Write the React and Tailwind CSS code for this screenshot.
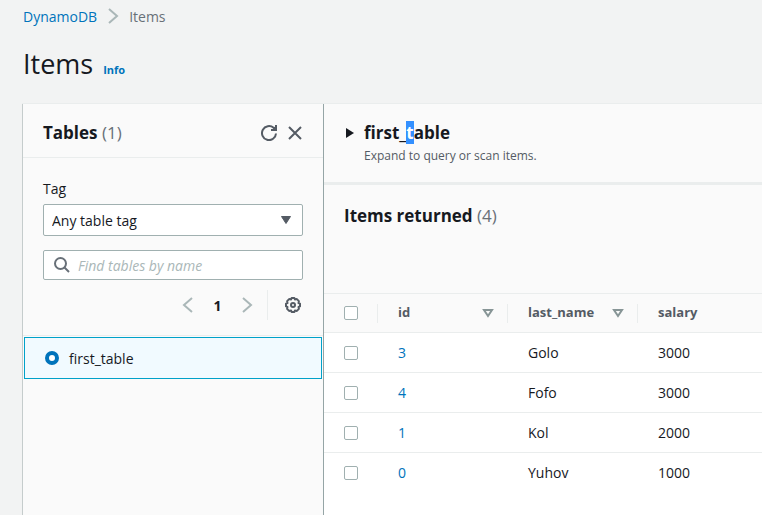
import React from "react";

const rows = [
  { id: "3", lastName: "Golo", salary: "3000" },
  { id: "4", lastName: "Fofo", salary: "3000" },
  { id: "1", lastName: "Kol", salary: "2000" },
  { id: "0", lastName: "Yuhov", salary: "1000" },
];

function Chevron({ className, left = false }) {
  return (
    <svg viewBox="0 0 16 16" className={className} fill="none" stroke="currentColor" strokeWidth="2" aria-hidden="true">
      <path d={left ? "M12 1 4 8l8 7" : "M4 1l8 7-8 7"} />
    </svg>
  );
}

function RefreshIcon() {
  return (
    <svg viewBox="0 0 16 16" className="size-4" fill="none" stroke="currentColor" strokeWidth="2" aria-hidden="true">
      <path d="M15 8.500A7 7 0 1 1 12.600 2.800L15 5" />
      <path d="M10 5h5V0" />
      <path d="M12 3l3 2V1z" fill="currentColor" stroke="none" />
    </svg>
  );
}

function CloseIcon() {
  return (
    <svg viewBox="0 0 16 16" className="size-4" fill="none" stroke="currentColor" strokeWidth="2" aria-hidden="true">
      <path d="M2 2l12 12M14 2 2 14" />
    </svg>
  );
}

function GearIcon() {
  return (
    <svg viewBox="0 0 16 16" className="size-4" fill="none" stroke="currentColor" strokeWidth="2" strokeLinejoin="round" aria-hidden="true">
      <path d="M6.600 1h2.800l.5 1.500 2-.4 2 2-.4 2 1.500.5v2.800l-1.500.5.4 2-2 2-2-.4L9.400 15H6.600l-.5-1.500-2 .4-2-2 .4-2L1 9.400V6.600l1.500-.5-.4-2 2-2 2 .4z" />
      <circle cx="8" cy="8" r="2" />
    </svg>
  );
}

function SearchIcon() {
  return (
    <svg viewBox="0 0 16 16" className="size-4" fill="none" stroke="currentColor" strokeWidth="2" aria-hidden="true">
      <circle cx="6.500" cy="6.500" r="5.500" />
      <path d="m10.500 10.500 4.500 4.500" />
    </svg>
  );
}

function SortIcon() {
  return (
    <svg viewBox="0 0 12 10" className="h-[10px] w-3" fill="none" stroke="currentColor" strokeWidth="2" aria-hidden="true">
      <path d="M2 2h8L6 8z" />
    </svg>
  );
}

function Checkbox({ label }) {
  return (
    <input
      type="checkbox"
      aria-label={label}
      className="block size-[14px] appearance-none rounded-xs border border-[#a0b0b0] bg-white checked:bg-[#0073bb]"
    />
  );
}

function HeaderCell({ children, sortable = true }) {
  return (
    <th scope="col" className="p-0 text-left text-[13px] font-bold">
      <div className="flex h-[38px] items-center">
        <span className="h-[19px] border-l border-[#eaeded]" />
        <div className="flex flex-1 items-center justify-between pr-[13px] pl-5">
          {children}
          {sortable && (
            <button type="button" aria-label={"Sort by " + children} className="text-[#879596]">
              <SortIcon />
            </button>
          )}
        </div>
      </div>
    </th>
  );
}

function TablesPanel() {
  return (
    <aside className="w-[302px] shrink-0 border-r border-l border-r-[#95a5a6] border-l-[#c5cccc] bg-[#fafafa]">
      <header className="flex h-[54px] items-center justify-between border-b border-[#eaeded] px-5 pt-1">
        <h2 className="text-[17px] font-bold">
          Tables <span className="font-normal text-[#687078]">(1)</span>
        </h2>
        <div className="flex gap-[10px] text-[#545b64]">
          <button type="button" aria-label="Refresh"><RefreshIcon /></button>
          <button type="button" aria-label="Close"><CloseIcon /></button>
        </div>
      </header>

      <div className="px-5 pt-5">
        <label htmlFor="tag" className="block pb-1 leading-[22px]">Tag</label>
        <div className="relative">
          <select id="tag" className="block h-8 w-full appearance-none rounded-xs border border-[#a0b0b0] bg-white px-2">
            <option>Any table tag</option>
          </select>
          <svg viewBox="0 0 12 10" className="pointer-events-none absolute top-[11px] right-[11px] h-[10px] w-3 fill-[#545b64]" aria-hidden="true">
            <path d="M1.500 1.500h9L6 8.500z" stroke="#545b64" strokeLinejoin="round" />
          </svg>
        </div>

        <label className="mt-[14px] flex h-[30px] items-center gap-2 rounded-xs border border-[#a0b0b0] bg-white px-[10px] text-[#687078]">
          <SearchIcon />
          <input
            type="text"
            aria-label="Find tables by name"
            placeholder="Find tables by name"
            className="min-w-0 flex-1 outline-none placeholder:text-[#aab7b8] placeholder:italic"
          />
        </label>
      </div>

      <div className="flex h-[56px] items-start justify-end border-b border-[#eaeded] px-5 pt-[10px]">
        <nav aria-label="Pagination" className="flex h-[30px] items-center gap-[17px] text-[#aab7b8]">
          <button type="button" aria-label="Previous page"><Chevron left className="size-4" /></button>
          <button type="button" className="w-[9px] font-bold text-[#16191f]">1</button>
          <button type="button" aria-label="Next page"><Chevron className="size-4" /></button>
        </nav>
        <div className="ml-3 flex h-[30px] items-center border-l border-[#eaeded] pr-[2px] pl-[17px] text-[#545b64]">
          <button type="button" aria-label="Preferences"><GearIcon /></button>
        </div>
      </div>

      <label className="m-px flex h-[42px] items-center gap-[10px] border border-[#00a1c9] bg-[#f1faff] px-5">
        <input type="radio" name="table" defaultChecked className="size-[14px] appearance-none rounded-full border border-[#a0b0b0] bg-white checked:border-[4px] checked:border-[#0073bb]" />
        first_table
      </label>
    </aside>
  );
}

function ItemsPanel() {
  return (
    <section className="min-w-0 flex-1 bg-white">
      <div className="flex h-[81px] items-start gap-2 border-b-[3px] border-[#eaeded] bg-[#fafafa] px-5 pt-[17px]">
        <button type="button" aria-label="Expand first_table" className="flex h-6 w-3 items-center justify-center">
          <svg viewBox="0 0 8 10" className="h-[10px] w-2 fill-[#16191f]" aria-hidden="true">
            <path d="M0 0l8 5-8 5z" />
          </svg>
        </button>
        <div>
          <h2 className="text-[17px] leading-6 font-bold">
            first_<span className="bg-[#3390ff] text-white">t</span>able
          </h2>
          <p className="text-xs leading-[22px] text-[#545b64]">Expand to query or scan items.</p>
        </div>
      </div>

      <div className="h-[109px] border-b border-[#eaeded] bg-[#fafafa] px-5 pt-[19px]">
        <h2 className="text-[17px] leading-6 font-bold">
          Items returned <span className="font-normal text-[#687078]">(4)</span>
        </h2>
      </div>

      <table className="w-full table-fixed border-collapse">
        <colgroup>
          <col className="w-[53px]" />
          <col className="w-[130px]" />
          <col className="w-[130px]" />
          <col />
        </colgroup>
        <thead className="border-b border-[#eaeded] bg-[#fafafa] text-[#545b64]">
          <tr>
            <th scope="col" className="py-0 pr-0 pl-5"><Checkbox label="Select all items" /></th>
            <HeaderCell>id</HeaderCell>
            <HeaderCell>last_name</HeaderCell>
            <HeaderCell sortable={false}>salary</HeaderCell>
          </tr>
        </thead>
        <tbody>
          {rows.map((row) => (
            <tr key={row.id} className="h-10 border-b border-[#eaeded] last:border-b-0">
              <td className="py-0 pr-0 pl-5"><Checkbox label={"Select item " + row.id} /></td>
              <td className="py-0 pr-0 pl-[21px]"><a href="#item" className="text-[#0073bb]">{row.id}</a></td>
              <td className="py-0 pr-0 pl-[21px]">{row.lastName}</td>
              <td className="py-0 pr-0 pl-[21px]">{row.salary}</td>
            </tr>
          ))}
        </tbody>
      </table>
    </section>
  );
}

export default function App() {
  return (
    <div className="flex min-h-screen flex-col bg-[#f2f3f3] pl-[22px] font-['Open_Sans','Noto_Sans',sans-serif] text-[14px] text-[#16191f]">
      <nav aria-label="Breadcrumb" className="flex h-8 items-center gap-2 pl-px">
        <a href="#dynamodb" className="text-[#0073bb]">DynamoDB</a>
        <Chevron className="size-4 text-[#aab7b8]" />
        <span className="text-[#687078]">Items</span>
      </nav>
      <div className="flex h-[71px] items-baseline gap-[10px] pt-3 pl-px">
        <h1 className="text-[27px] leading-10">Items</h1>
        <a href="#info" className="text-[11px] font-bold text-[#0073bb]">Info</a>
      </div>
      <main className="flex flex-1 border-t border-[#eaeded]">
        <TablesPanel />
        <ItemsPanel />
      </main>
    </div>
  );
}
